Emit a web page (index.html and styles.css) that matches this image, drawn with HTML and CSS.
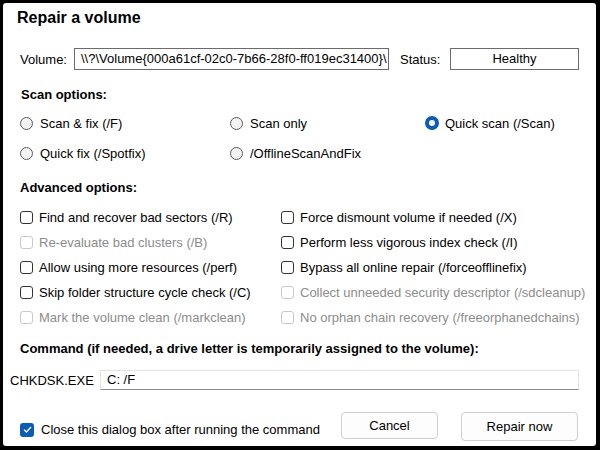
FILE: index.html
```html
<!DOCTYPE html>
<html lang="en">
<head>
  <meta charset="utf-8">
  <title>Repair a volume</title>
  <link rel="stylesheet" href="styles.css">
</head>
<body>
<div class="dialog">
  <div class="title">Repair a volume</div>

  <div class="volume-row">
    <span class="lbl">Volume:</span>
    <div class="field volume">\\?\Volume{000a61cf-02c0-7b66-28f0-ff019ec31400}\</div>
    <span class="lbl status-lbl">Status:</span>
    <div class="field status">Healthy</div>
  </div>

  <div class="heading scan-head">Scan options:</div>
  <div class="radios">
    <label class="opt"><span class="radio"></span>Scan &amp; fix (/F)</label>
    <label class="opt"><span class="radio"></span>Scan only</label>
    <label class="opt"><span class="radio on"></span>Quick scan (/Scan)</label>
    <label class="opt"><span class="radio"></span>Quick fix (/Spotfix)</label>
    <label class="opt"><span class="radio"></span>/OfflineScanAndFix</label>
  </div>

  <div class="heading adv-head">Advanced options:</div>
  <div class="checks">
    <label class="opt"><span class="box"></span>Find and recover bad sectors (/R)</label>
    <label class="opt"><span class="box"></span>Force dismount volume if needed (/X)</label>
    <label class="opt off"><span class="box"></span>Re-evaluate bad clusters (/B)</label>
    <label class="opt"><span class="box"></span>Perform less vigorous index check (/I)</label>
    <label class="opt"><span class="box"></span>Allow using more resources (/perf)</label>
    <label class="opt"><span class="box"></span>Bypass all online repair (/forceofflinefix)</label>
    <label class="opt"><span class="box"></span>Skip folder structure cycle check (/C)</label>
    <label class="opt off"><span class="box"></span>Collect unneeded security descriptor (/sdcleanup)</label>
    <label class="opt off"><span class="box"></span>Mark the volume clean (/markclean)</label>
    <label class="opt off"><span class="box"></span>No orphan chain recovery (/freeorphanedchains)</label>
  </div>

  <div class="heading cmd-head">Command (if needed, a drive letter is temporarily assigned to the volume):</div>
  <div class="cmd-row">
    <span class="exe">CHKDSK.EXE</span>
    <div class="cmd">C: /F</div>
  </div>

  <div class="footer">
    <label class="opt close-opt">
      <span class="box checked">
        <svg width="9" height="7" viewBox="0 0 9 7"><path d="M1 3.6 L3.4 6 L8 1" fill="none" stroke="#fff" stroke-width="1.3"/></svg>
      </span>Close this dialog box after running the command
    </label>
    <button class="btn cancel">Cancel</button>
    <button class="btn repair">Repair now</button>
  </div>
</div>
</body>
</html>
```

FILE: styles.css
```css
* {
  margin: 0;
  padding: 0;
  box-sizing: border-box;
}

body {
  background: #000;
  font-family: "Liberation Sans", Arial, sans-serif;
  font-size: 13px;
  color: #000;
}

.dialog {
  margin: 3px 4px 0 3px;
  height: 443px;
  background: #fff;
  border-radius: 3px;
  padding: 5px 0 0 17px;
}

.title {
  font-size: 16px;
  font-weight: bold;
  line-height: 20px;
  margin-left: -3px;
}

.volume-row {
  display: flex;
  align-items: center;
  margin-top: 20px;
  height: 22px;
}

.lbl {
  width: 54px;
}

.status-lbl {
  margin-left: 11px;
  width: 50px;
}

.field {
  height: 22px;
  line-height: 20px;
  border: 1px solid #6b6b6b;
  white-space: nowrap;
  overflow: hidden;
}

.volume {
  width: 315px;
  padding-left: 6px;
}

.status {
  width: 129px;
  text-align: center;
}

.heading {
  font-weight: bold;
  line-height: 16px;
}

.scan-head {
  margin: 17px 0 5px 1px;
}

.radios {
  display: grid;
  grid-template-columns: 210px 195px 1fr;
  grid-auto-rows: 30px;
}

.opt {
  display: flex;
  align-items: center;
  white-space: nowrap;
}

.radio {
  width: 13px;
  height: 13px;
  border-radius: 50%;
  border: 1px solid #5a5a5a;
  background: #f3f3f3;
  margin-right: 7px;
}

.radio.on {
  width: 14px;
  height: 14px;
  border: 4px solid #0b5cb5;
  background: #fff;
  margin-right: 6px;
}

.adv-head {
  margin: 12px 0 9px;
}

.checks {
  display: grid;
  grid-template-columns: 261px 1fr;
  grid-auto-rows: 25px;
}

.box {
  width: 13px;
  height: 13px;
  border: 1.5px solid #333;
  border-radius: 3px;
  margin-right: 6px;
  display: flex;
  align-items: center;
  justify-content: center;
}

.off {
  color: #8c8c8c;
}

.off .box {
  border: 1px solid #c9c9c9;
}

.cmd-head {
  margin-top: 11px;
}

.cmd-row {
  display: flex;
  align-items: center;
  margin: 13px 0 0 -10px;
  height: 20px;
}

.exe {
  width: 90px;
}

.cmd {
  width: 479px;
  height: 20px;
  line-height: 18px;
  border: 1px solid #e3e3e3;
  border-bottom-color: #8a8a8a;
  padding-left: 6px;
}

.footer {
  display: flex;
  align-items: flex-start;
  margin-top: 22px;
}

.close-opt {
  width: 321px;
  margin-top: 10px;
}

.box.checked {
  width: 14px;
  height: 14px;
  background: #0b5cb5;
  border: none;
  margin-right: 7px;
}

.btn {
  font-family: "Liberation Sans", Arial, sans-serif;
  font-size: 13px;
  background: #fdfdfd;
  border: 1px solid #cfcfcf;
  border-radius: 4px;
  color: #000;
}

.cancel {
  width: 97px;
  height: 27px;
}

.repair {
  width: 117px;
  height: 29px;
  margin-left: 23px;
}
```
